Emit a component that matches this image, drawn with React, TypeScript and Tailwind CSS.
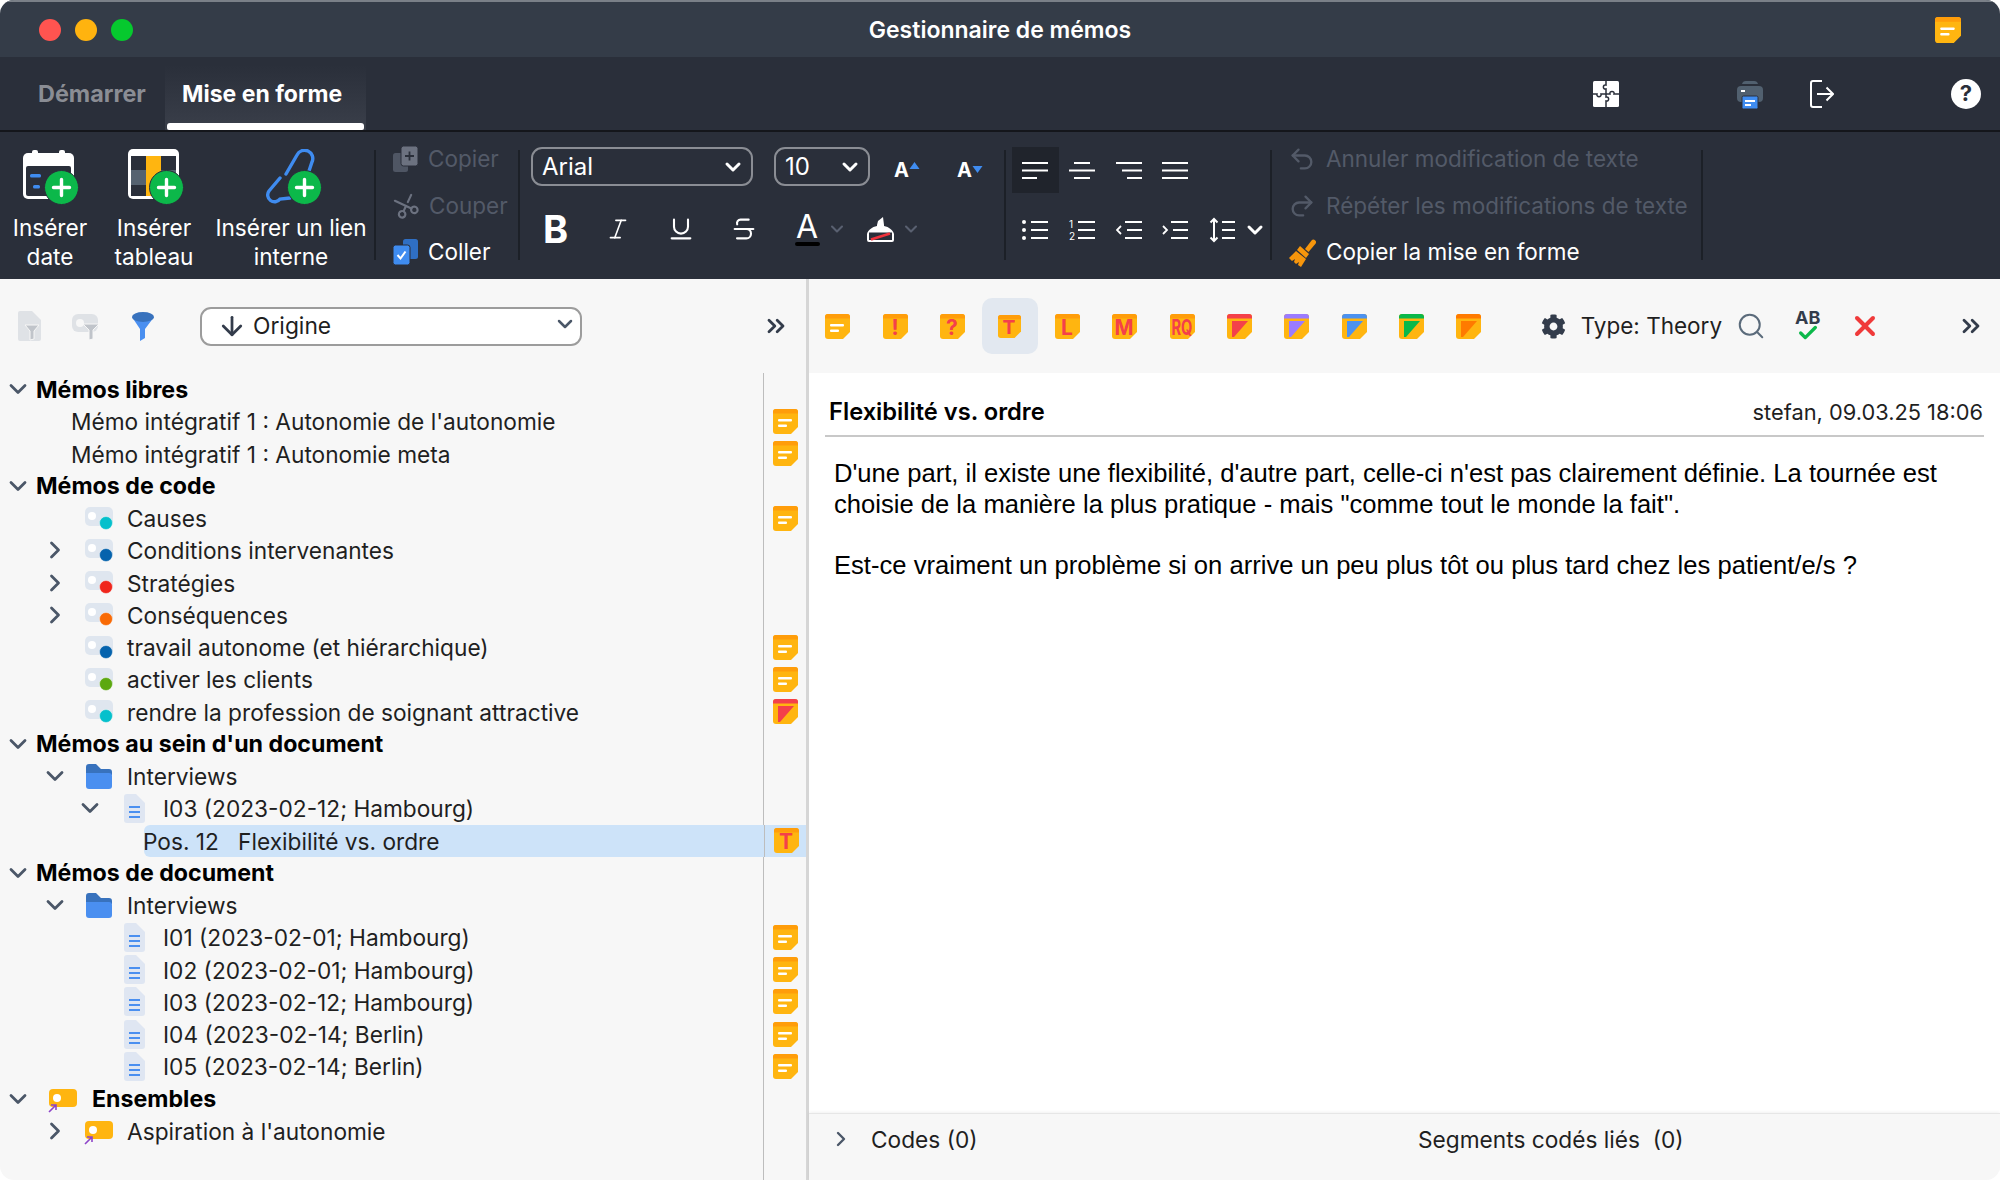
import { ChevronDown, ChevronRight, ChevronsRight, ArrowDown, Italic, Underline, Strikethrough, Scissors, Search, X, Check, Undo2, Redo2 } from "lucide-react";
import { FaCog } from "react-icons/fa";
import type { ReactNode } from "react";

const RED = "#f4404a";

function NoteIcon({ band = "#ff9d0a", tri, letter, lines, size = 25 }: { band?: string; tri?: string; letter?: string; lines?: boolean; size?: number }) {
    return (
        <svg viewBox="0 0 25 25" width={size} height={size} className="shrink-0 overflow-visible">
            <path d="M3 0h19a3 3 0 0 1 3 3v15l-7 7H3a3 3 0 0 1-3-3V3a3 3 0 0 1 3-3z" fill="#ffb510" />
            <path d="M3 0h19a3 3 0 0 1 3 3v1.5H0V3a3 3 0 0 1 3-3z" fill={band} />
            {lines && (
                <>
                    <rect x="5" y="10" width="14" height="2.4" rx="1" fill="#fff" />
                    <rect x="5" y="15.5" width="9" height="2.4" rx="1" fill="#fff" />
                </>
            )}
            {tri && <path d="M5 7h16L7 23H5z" fill={tri} />}
            {letter && (
                <text
                    x="12"
                    y="21"
                    textAnchor="middle"
                    fontFamily="Inter, sans-serif"
                    fontWeight="700"
                    fontSize={21}
                    fill={RED}
                    textLength={letter.length > 1 ? 21 : letter === "M" ? 19 : undefined}
                    lengthAdjust="spacingAndGlyphs"
                >
                    {letter}
                </text>
            )}
        </svg>
    );
}

function CodeIcon({ color }: { color: string }) {
    return (
        <svg viewBox="0 0 28 23" className="h-[23px] w-[28px] shrink-0">
            <rect x="0" y="0" width="28" height="19" rx="5" fill="#dfe6ef" />
            <circle cx="7" cy="9" r="4" fill="#fff" />
            <circle cx="21" cy="16" r="6.5" fill={color} stroke="#f7f7f7" strokeWidth="0.5" />
        </svg>
    );
}

function FolderIcon() {
    return (
        <svg viewBox="0 0 26 25" className="h-[25px] w-[26px] shrink-0">
            <path d="M0 3a3 3 0 0 1 3-3h7l5 5h8a3 3 0 0 1 3 3v3H0z" fill="#3872bd" />
            <path d="M0 9h23a3 3 0 0 1 3 3v10a3 3 0 0 1-3 3H3a3 3 0 0 1-3-3z" fill="#4a8ff0" />
        </svg>
    );
}

function DocIcon() {
    return (
        <svg viewBox="0 0 21 29" className="h-[29px] w-[21px] shrink-0">
            <path d="M3 0h9l9 9v17a3 3 0 0 1-3 3H3a3 3 0 0 1-3-3V3a3 3 0 0 1 3-3z" fill="#dfe6f2" />
            <rect x="5" y="12" width="11" height="2" fill="#4a8ff0" />
            <rect x="5" y="17" width="11" height="2" fill="#4a8ff0" />
            <rect x="5" y="22" width="11" height="2" fill="#4a8ff0" />
        </svg>
    );
}

function SetIcon() {
    return (
        <svg viewBox="0 0 29 24" className="mt-[4px] h-[24px] w-[29px] shrink-0">
            <rect x="1" y="0" width="28" height="18" rx="4" fill="#ffb510" />
            <circle cx="9" cy="9" r="4" fill="#fff" />
            <path d="M1 23l7-7M3 16h5v5" stroke="#8e44c9" strokeWidth="1.6" fill="none" />
        </svg>
    );
}

function PlusBadge({ cx = 38.5, cy = 38.5 }: { cx?: number; cy?: number }) {
    return (
        <>
            <circle cx={cx} cy={cy} r="17" fill="#0cb84a" stroke="#2a2f3a" strokeWidth="1" />
            <path d={`M${cx - 8} ${cy}h16M${cx} ${cy - 8}v16`} stroke="#fff" strokeWidth="3.4" strokeLinecap="round" />
        </>
    );
}

function CalendarIcon() {
    return (
        <svg viewBox="0 0 56 56" className="ml-[1px] h-[56px] w-[56px]">
            <rect x="0" y="4" width="51" height="46" rx="5" fill="#fff" />
            <rect x="3" y="17" width="45" height="30" rx="2" fill="#2a2f3a" />
            <rect x="9" y="1" width="6" height="6" rx="2" fill="#fff" />
            <rect x="36" y="1" width="6" height="6" rx="2" fill="#fff" />
            <rect x="7" y="25" width="11" height="3.5" rx="1.5" fill="#3f8cf0" />
            <rect x="10" y="36" width="7" height="3.5" rx="1.5" fill="#3f8cf0" />
            <PlusBadge />
        </svg>
    );
}

function TableIcon() {
    return (
        <svg viewBox="0 0 56 56" className="ml-[4px] h-[56px] w-[56px]">
            <rect x="0" y="0" width="51" height="50" rx="5" fill="#fff" />
            <rect x="3" y="7" width="45" height="40" fill="#2a2f3a" />
            <rect x="18" y="7" width="15" height="40" fill="#ffb510" />
            <rect x="3" y="21" width="15" height="15" fill="#556270" />
            <rect x="33" y="21" width="15" height="15" fill="#556270" />
            <PlusBadge />
        </svg>
    );
}

function LinkIcon() {
    return (
        <svg viewBox="0 0 56 56" className="ml-[5px] h-[56px] w-[56px]">
            <path d="M20 25L31 6a8 8 0 0 1 15 7l-3 9" fill="none" stroke="#3f8cf0" strokeWidth="3.4" strokeLinecap="round" />
            <path d="M14 29L3 42a6.5 6.5 0 0 0 11 8l10-1" fill="none" stroke="#3f8cf0" strokeWidth="3.4" strokeLinecap="round" />
            <PlusBadge />
        </svg>
    );
}

function CopyIcon() {
    return (
        <svg viewBox="0 0 25 26" className="h-[26px] w-[25px]">
            <rect x="0" y="7" width="15" height="19" rx="2.5" fill="#4f5664" />
            <rect x="8" y="0" width="17" height="20" rx="2.5" fill="#6c7280" stroke="#2a2f3a" strokeWidth="1" />
            <path d="M16.5 5.5v9M12 10h9" stroke="#2a2f3a" strokeWidth="1.8" />
        </svg>
    );
}

function PasteIcon() {
    return (
        <svg viewBox="0 0 25 26" className="h-[26px] w-[25px]">
            <rect x="10" y="0" width="15" height="20" rx="2.5" fill="#2f6fc4" />
            <rect x="0" y="6" width="17" height="20" rx="2.5" fill="#3f8cf0" stroke="#2a2f3a" strokeWidth="1" />
            <path d="M4.5 16l3 3.5 5-7" stroke="#fff" strokeWidth="2" fill="none" />
        </svg>
    );
}

function BrushIcon() {
    return (
        <svg viewBox="0 0 28 29" className="h-[29px] w-[28px]">
            <path d="M17 11l6.5-8.5a2.6 2.6 0 0 1 4 3.3L20.5 14z" fill="#f7960c" />
            <path d="M12 8l9 8-3 4-9-8z" fill="#f7960c" />
            <path d="M8 13l10 8-5 8-3-2 1-3-3 2-2-2 1-3-3 2-3-3z" fill="#f7960c" />
        </svg>
    );
}

function AlignIcon({ lines }: { lines: [number, number][] }) {
    return (
        <svg viewBox="0 0 26 22" className="h-[22px] w-[26px]">
            {lines.map(([x, w], i) => (
                <rect key={i} x={x} y={i * 7.5 + 3} width={w} height="2" fill="#fff" />
            ))}
        </svg>
    );
}

function BulletIcon() {
    return (
        <svg viewBox="0 0 26 24" className="h-[24px] w-[26px]">
            {[4, 12, 20].map((y) => (
                <g key={y}>
                    <circle cx="2" cy={y} r="2" fill="#fff" />
                    <rect x="9" y={y - 1} width="17" height="2" fill="#fff" />
                </g>
            ))}
        </svg>
    );
}

function NumberIcon() {
    return (
        <svg viewBox="0 0 26 24" className="h-[24px] w-[26px] overflow-visible">
            <text x="0" y="10" fontFamily="Inter, sans-serif" fontSize="10" fill="#fff">1</text>
            <text x="0" y="22" fontFamily="Inter, sans-serif" fontSize="10" fill="#fff">2</text>
            {[4, 12, 20].map((y) => (
                <rect key={y} x="9" y={y - 1} width="17" height="2" fill="#fff" />
            ))}
        </svg>
    );
}

function IndentIcon({ out }: { out?: boolean }) {
    return (
        <svg viewBox="0 0 26 24" className="h-[24px] w-[26px]">
            <path d={out ? "M5 8l-4 4 4 4" : "M1 8l4 4-4 4"} stroke="#fff" strokeWidth="1.8" fill="none" />
            {[4, 12, 20].map((y, i) => (
                <rect key={y} x={i === 1 ? 11 : 9} y={y - 1} width={i === 1 ? 15 : 17} height="2" fill="#fff" />
            ))}
        </svg>
    );
}

function SpacingIcon() {
    return (
        <svg viewBox="0 0 26 26" className="h-[26px] w-[26px]">
            <path d="M5 2v22M1.5 5.5L5 2l3.5 3.5M1.5 20.5L5 24l3.5-3.5" stroke="#fff" strokeWidth="2" fill="none" />
            {[5, 13, 21].map((y) => (
                <rect key={y} x="13" y={y - 1} width="13" height="2" fill="#fff" />
            ))}
        </svg>
    );
}

function HighlighterIcon() {
    return (
        <svg viewBox="0 0 27 26" className="h-[26px] w-[27px]">
            <path d="M10 9l1-4 5-4 1 8v1c5 1 9 4 10 8v6a2 2 0 0 1-2 2H2a2 2 0 0 1-2-2v-6c1-4 5-7 10-8z" fill="#fff" />
            <rect x="2" y="16.5" width="23" height="7.5" fill="#2a2f3a" />
            <path d="M4 23.5l19-6" stroke="#f0323c" strokeWidth="2.6" />
        </svg>
    );
}

function PuzzleIcon() {
    return (
        <svg viewBox="0 0 26 30" className="h-[30px] w-[26px]">
            <rect x="0" y="2" width="26" height="26" rx="1.5" fill="#fff" />
            <path
                d="M13 2v4c-3.5-1-3.5 5 0 4v5M13 15v3c3.5-1 3.5 5 0 4v6M0 15h4c-1 3.5 5 3.5 4 0h5M13 15h4c-1-3.5 5-3.5 4 0h5"
                stroke="#2a2f3a"
                strokeWidth="1.5"
                fill="none"
            />
        </svg>
    );
}

function PrinterIcon() {
    return (
        <svg viewBox="0 0 26 30" className="h-[30px] w-[26px]">
            <path d="M5 5a4 4 0 0 1 4-3h8a4 4 0 0 1 4 3z" fill="#51606f" />
            <rect x="0" y="7" width="26" height="16" rx="4" fill="#51606f" />
            <rect x="4" y="11" width="4" height="2" fill="#fff" />
            <rect x="5" y="17" width="16" height="13" rx="1.5" fill="#3f8cf0" stroke="#2a2f3a" strokeWidth="1" />
            <rect x="8" y="21" width="10" height="2" fill="#fff" />
            <rect x="8" y="25" width="6" height="2" fill="#fff" />
        </svg>
    );
}

function ExitIcon() {
    return (
        <svg viewBox="0 0 24 30" className="h-[30px] w-[24px]">
            <path d="M12 2H3a2 2 0 0 0-2 2v22a2 2 0 0 0 2 2h9" stroke="#fff" strokeWidth="2" fill="none" />
            <path d="M7 15h16M16.5 8.5L23 15l-6.5 6.5" stroke="#fff" strokeWidth="2" fill="none" />
        </svg>
    );
}

function FunnelIcon() {
    return (
        <svg viewBox="0 0 22 29" className="h-[29px] w-[22px]">
            <path d="M0 5l8 12v12l5-3V17l9-12z" fill="#4a8ff0" />
            <ellipse cx="11" cy="5" rx="11" ry="5" fill="#3872bd" />
        </svg>
    );
}

function DocFilterIcon() {
    return (
        <svg viewBox="0 0 24 30" className="h-[30px] w-[24px]">
            <path d="M2 0h12l9 9v19a2 2 0 0 1-2 2H2a2 2 0 0 1-2-2V2a2 2 0 0 1 2-2z" fill="#dfe2e6" />
            <path d="M7 14h14l-5 6v8l-4 1v-9z" fill="#c0c4ca" stroke="#f7f7f7" strokeWidth="1" />
        </svg>
    );
}

function QuoteFilterIcon() {
    return (
        <svg viewBox="0 0 28 28" className="h-[28px] w-[28px]">
            <rect x="0" y="2" width="26" height="18" rx="6" fill="#dfe2e6" />
            <circle cx="8" cy="11" r="4" fill="#f7f7f7" />
            <path d="M11 12h16l-6 6v9l-4 1v-10z" fill="#c0c4ca" stroke="#f7f7f7" strokeWidth="1" />
        </svg>
    );
}

function Sep() {
    return <div className="mt-[18px] h-[110px] w-[2px] shrink-0 bg-[#1c2027]" />;
}

function RibbonBtn({ w, icon, lines }: { w: string; icon: ReactNode; lines: string[] }) {
    return (
        <div className={`flex shrink-0 flex-col items-center pt-[17px] ${w}`}>
            {icon}
            <div className="mt-[8px] text-center text-[22.6px] leading-[29px] text-white">
                {lines.map((l) => (
                    <div key={l}>{l}</div>
                ))}
            </div>
        </div>
    );
}

function ActionRow({ icon, label, muted }: { icon: ReactNode; label: string; muted?: boolean }) {
    return (
        <div className={`flex h-[46.5px] items-center text-[22.5px] ${muted ? "text-[#535a68]" : "text-white"}`}>
            {icon}
            <span className="ml-[10px] whitespace-nowrap">{label}</span>
        </div>
    );
}

function Dropdown({ w, label }: { w: string; label: string }) {
    return (
        <div className={`flex h-[39px] shrink-0 items-center justify-between rounded-[11px] border-2 border-[#8a8d94] pl-[9px] pr-[6px] text-[24px] text-white ${w}`}>
            <span>{label}</span>
            <ChevronDown size={24} strokeWidth={3} />
        </div>
    );
}

function SizeBtn({ up }: { up?: boolean }) {
    return (
        <div className="mt-[6px] flex w-[27px] shrink-0 items-center text-[20px] font-bold leading-none text-white">
            <span>A</span>
            <svg viewBox="0 0 10 7" className={`h-[7px] w-[11px] ${up ? "-mt-[9px]" : "-mt-[1px]"}`}>
                <path d={up ? "M5 0l5 7H0z" : "M0 0h10L5 7z"} fill="#3f8cf0" />
            </svg>
        </div>
    );
}

function Cell({ active, children }: { active?: boolean; children: ReactNode }) {
    return <div className={`flex h-[46px] w-[46.7px] shrink-0 items-center justify-center ${active ? "bg-[#20242c]" : ""}`}>{children}</div>;
}

function Ribbon() {
    return (
        <div className="flex h-[149px] shrink-0 border-t-2 border-[#14161b] bg-[#2a2f3a]">
            <RibbonBtn w="w-[100px]" icon={<CalendarIcon />} lines={["Insérer", "date"]} />
            <RibbonBtn w="w-[108px]" icon={<TableIcon />} lines={["Insérer", "tableau"]} />
            <RibbonBtn w="w-[166px]" icon={<LinkIcon />} lines={["Insérer un lien", "interne"]} />
            <Sep />
            <div className="mt-[4px] w-[142px] shrink-0 pl-[17px]">
                <ActionRow muted icon={<CopyIcon />} label="Copier" />
                <ActionRow muted icon={<Scissors size={26} className="-rotate-[110deg] text-[#6c7280]" />} label="Couper" />
                <ActionRow icon={<PasteIcon />} label="Coller" />
            </div>
            <Sep />
            <div className="w-[484px] shrink-0 pt-[15px]">
                <div className="flex items-center pl-[11px]">
                    <Dropdown w="w-[222px]" label="Arial" />
                    <div className="ml-[21px]">
                        <Dropdown w="w-[96px]" label="10" />
                    </div>
                    <div className="ml-[24px]">
                        <SizeBtn up />
                    </div>
                    <div className="ml-[36px]">
                        <SizeBtn />
                    </div>
                </div>
                <div className="mt-[26px] flex h-[34px] items-center text-white">
                    <span className="ml-[23px] w-[25px] text-[38px] font-bold leading-none">B</span>
                    <Italic size={26} strokeWidth={1.5} className="ml-[37px]" />
                    <Underline size={28} strokeWidth={1.8} className="ml-[36px]" />
                    <Strikethrough size={28} strokeWidth={1.8} className="ml-[35px]" />
                    <div className="ml-[36px] flex w-[26px] flex-col items-center">
                        <span className="text-[32px] leading-[30px]">A</span>
                        <div className="h-[4px] w-[25px] rounded-sm bg-black" />
                    </div>
                    <ChevronDown size={20} strokeWidth={2.5} className="ml-[7px] text-[#596070]" />
                    <div className="ml-[20px]">
                        <HighlighterIcon />
                    </div>
                    <ChevronDown size={20} strokeWidth={2.5} className="ml-[7px] text-[#596070]" />
                </div>
            </div>
            <Sep />
            <div className="w-[264px] shrink-0 pl-[6px] pt-[15px]">
                <div className="flex">
                    <Cell active><AlignIcon lines={[[0, 26], [0, 26], [0, 15]]} /></Cell>
                    <Cell><AlignIcon lines={[[5, 16], [0, 26], [5, 16]]} /></Cell>
                    <Cell><AlignIcon lines={[[0, 26], [6, 20], [11, 15]]} /></Cell>
                    <Cell><AlignIcon lines={[[0, 26], [0, 26], [0, 26]]} /></Cell>
                </div>
                <div className="mt-[14px] flex items-center">
                    <Cell><BulletIcon /></Cell>
                    <Cell><NumberIcon /></Cell>
                    <Cell><IndentIcon out /></Cell>
                    <Cell><IndentIcon /></Cell>
                    <Cell><SpacingIcon /></Cell>
                    <ChevronDown size={24} strokeWidth={3} className="-ml-[2px] text-white" />
                </div>
            </div>
            <Sep />
            <div className="mt-[4px] w-[429px] shrink-0 pl-[16px]">
                <ActionRow muted icon={<Undo2 size={28} className="text-[#535a68]" />} label="Annuler modification de texte" />
                <ActionRow muted icon={<Redo2 size={28} className="text-[#535a68]" />} label="Répéter les modifications de texte" />
                <ActionRow icon={<BrushIcon />} label="Copier la mise en forme" />
            </div>
            <Sep />
        </div>
    );
}

type Row = {
    label: string;
    pad: string;
    bold?: boolean;
    chevron?: "down" | "right";
    noChevron?: boolean;
    icon?: ReactNode;
    iconGap?: string;
    textGap: string;
    note?: ReactNode;
    selected?: boolean;
};

const note = <NoteIcon lines />;
const heading = (label: string): Row => ({ label, pad: "pl-[9px]", bold: true, chevron: "down", textGap: "ml-[9px]" });
const code = (label: string, color: string, hasNote: boolean, right?: boolean): Row => ({
    label,
    pad: "pl-[46px]",
    chevron: right ? "right" : undefined,
    noChevron: !right,
    icon: <CodeIcon color={color} />,
    iconGap: "ml-[21px]",
    textGap: "ml-[14px]",
    note: hasNote ? note : undefined,
});
const folder: Row = { label: "Interviews", pad: "pl-[46px]", chevron: "down", icon: <FolderIcon />, iconGap: "ml-[22px]", textGap: "ml-[15px]" };
const doc = (label: string, down?: boolean): Row => ({
    label,
    pad: "pl-[81px]",
    chevron: down ? "down" : undefined,
    noChevron: !down,
    icon: <DocIcon />,
    iconGap: "ml-[25px]",
    textGap: "ml-[18px]",
    note: down ? undefined : note,
});

const rows: Row[] = [
    heading("Mémos libres"),
    { label: "Mémo intégratif 1 : Autonomie de l'autonomie", pad: "pl-[71px]", textGap: "ml-0", note },
    { label: "Mémo intégratif 1 : Autonomie meta", pad: "pl-[71px]", textGap: "ml-0", note },
    heading("Mémos de code"),
    code("Causes", "#05c0cc", true),
    code("Conditions intervenantes", "#0563ad", false, true),
    code("Stratégies", "#f0261c", false, true),
    code("Conséquences", "#f96a05", false, true),
    code("travail autonome (et hiérarchique)", "#0563ad", true),
    code("activer les clients", "#5ca810", true),
    { ...code("rendre la profession de soignant attractive", "#05c0cc", false), note: <NoteIcon band="#f4404a" tri="#f4404a" /> },
    heading("Mémos au sein d'un document"),
    folder,
    doc("I03 (2023-02-12; Hambourg)", true),
    { label: "Pos. 12\u00a0\u00a0\u00a0Flexibilité vs. ordre", pad: "", textGap: "", selected: true, note: <NoteIcon letter="T" /> },
    heading("Mémos de document"),
    folder,
    doc("I01 (2023-02-01; Hambourg)"),
    doc("I02 (2023-02-01; Hambourg)"),
    doc("I03 (2023-02-12; Hambourg)"),
    doc("I04 (2023-02-14; Berlin)"),
    doc("I05 (2023-02-14; Berlin)"),
    { label: "Ensembles", pad: "pl-[9px]", bold: true, chevron: "down", icon: <SetIcon />, iconGap: "ml-[21px]", textGap: "ml-[15px]" },
    { label: "Aspiration à l'autonomie", pad: "pl-[46px]", chevron: "right", icon: <SetIcon />, iconGap: "ml-[20px]", textGap: "ml-[14px]" },
];

function TreeRow({ row }: { row: Row }) {
    if (row.selected) {
        return (
            <div className="flex h-[32.26px] shrink-0 pl-[144px]">
                <div className="flex flex-1 items-center rounded-l-md bg-[#cde3f9]">
                    <span className="-ml-[1px] flex-1 translate-y-[1px] whitespace-nowrap text-[22.7px] text-[#1f1f1f]">{row.label}</span>
                    <div className="flex h-full w-[42px] items-center justify-center border-l border-[#bdbdbd] pl-[1px]">{row.note}</div>
                </div>
            </div>
        );
    }
    return (
        <div className="flex h-[32.26px] shrink-0 items-center">
            <div className={`flex w-[763px] items-center ${row.pad}`}>
                {row.chevron && (
                    <div className="flex w-[18px] shrink-0 justify-center text-[#4b5768]">
                        {row.chevron === "down" ? <ChevronDown size={28} strokeWidth={2.4} className="shrink-0" /> : <ChevronRight size={28} strokeWidth={2.4} className="shrink-0" />}
                    </div>
                )}
                {row.noChevron && <div className="w-[18px] shrink-0" />}
                {row.icon && <div className={row.iconGap}>{row.icon}</div>}
                <span className={`translate-y-[1px] whitespace-nowrap ${row.textGap} ${row.bold ? "text-[23.2px] font-bold text-black" : "text-[22.7px] text-[#1f1f1f]"}`}>{row.label}</span>
            </div>
            <div className="flex h-full w-[42px] items-center justify-center border-l border-[#bdbdbd] pl-[1px]">{row.note}</div>
        </div>
    );
}

function LeftPanel() {
    return (
        <div className="flex w-[806px] shrink-0 flex-col bg-[#f7f7f7]">
            <div className="flex h-[94px] shrink-0 items-center pl-[18px]">
                <DocFilterIcon />
                <div className="ml-[30px]">
                    <QuoteFilterIcon />
                </div>
                <div className="ml-[32px]">
                    <FunnelIcon />
                </div>
                <div className="ml-[46px] flex h-[39px] w-[382px] items-center rounded-[11px] border-2 border-[#9c9c9c] bg-white pl-[15px] pr-[3px] text-[22.8px] text-[#1f1f1f]">
                    <ArrowDown size={30} strokeWidth={2.2} className="text-[#333c4b]" />
                    <span className="ml-[6px] flex-1">Origine</span>
                    <ChevronDown size={24} strokeWidth={2.5} className="-mt-[4px] text-[#4b5768]" />
                </div>
                <ChevronsRight size={28} strokeWidth={2.4} className="ml-[180px] text-[#333c4b]" />
            </div>
            <div className="flex min-h-0 flex-1 flex-col">
                {rows.map((row, i) => (
                    <TreeRow key={i} row={row} />
                ))}
                <div className="ml-[763px] flex-1 border-l border-[#bdbdbd]" />
            </div>
        </div>
    );
}

const toolbarNotes: ReactNode[] = [
    <NoteIcon lines />,
    <NoteIcon letter="!" />,
    <NoteIcon letter="?" />,
    <NoteIcon letter="T" size={23} />,
    <NoteIcon letter="L" />,
    <NoteIcon letter="M" />,
    <NoteIcon letter="RQ" />,
    <NoteIcon band="#f4404a" tri="#f4404a" />,
    <NoteIcon band="#9b7bff" tri="#9b7bff" />,
    <NoteIcon band="#4c92f0" tri="#4c92f0" />,
    <NoteIcon band="#0ab84a" tri="#0ab84a" />,
    <NoteIcon band="#ff7a00" tri="#ff7a00" />,
];

function RightPanel() {
    return (
        <div className="flex min-w-0 flex-1 flex-col bg-white">
            <div className="flex h-[94px] shrink-0 items-center bg-[#f7f7f7]">
                {toolbarNotes.map((icon, i) => (
                    <div key={i} className="flex w-[57.4px] shrink-0 items-center justify-center">
                        <div className={`flex h-[56px] w-[56px] items-center justify-center rounded-[10px] ${i === 3 ? "bg-[#e2e8f0]" : ""}`}>{icon}</div>
                    </div>
                ))}
                <FaCog className="ml-[43px] h-[25px] w-[25px] text-[#333c4b]" />
                <span className="ml-[15px] w-[140px] whitespace-nowrap text-[22.5px] text-[#1f1f1f]">Type: Theory</span>
                <Search size={30} strokeWidth={1.6} className="ml-[15px] text-[#5b6b7b]" />
                <div className="ml-[28px] flex w-[28px] flex-col items-center">
                    <span className="text-[18px] font-bold leading-[17px] text-[#333c4b]">AB</span>
                    <Check size={22} strokeWidth={3.6} className="-mt-[4px] text-[#0cb84a]" />
                </div>
                <X size={32} strokeWidth={3} className="ml-[27px] text-[#f03a3a]" />
                <ChevronsRight size={28} strokeWidth={2.4} className="ml-[76px] text-[#333c4b]" />
            </div>
            <div className="mx-[16px] flex h-[64px] shrink-0 items-center justify-between border-b-2 border-[#c8c8c8] pl-[4px] pr-[1px] pt-[16px] text-black">
                <span className="text-[23.7px] font-semibold">Flexibilité vs. ordre</span>
                <span className="text-[21.8px] text-[#1f1f1f]">stefan, 09.03.25 18:06</span>
            </div>
            <div className="flex-1 pl-[25px] pr-[40px] pt-[21px] font-['Liberation_Sans',Arial,sans-serif] text-[25.6px] leading-[30.6px] text-black">
                <p>D'une part, il existe une flexibilité, d'autre part, celle-ci n'est pas clairement définie. La tournée est choisie de la manière la plus pratique - mais "comme tout le monde la fait".</p>
                <p className="mt-[30.6px]">Est-ce vraiment un problème si on arrive un peu plus tôt ou plus tard chez les patient/e/s ?</p>
            </div>
            <div className="flex h-[67px] shrink-0 items-center border-t border-[#e6e6e6] bg-[#f7f7f7] pb-[13px] text-[22.7px] text-[#1f1f1f] shadow-[0_-1px_3px_rgba(0,0,0,0.06)]">
                <ChevronRight size={24} strokeWidth={2.4} className="ml-[20px] -mt-[3px] text-[#4b5768]" />
                <span className="ml-[18px] w-[547px]">Codes (0)</span>
                <span>Segments codés liés&nbsp; (0)</span>
            </div>
        </div>
    );
}

export default function App() {
    return (
        <div className="flex h-[1180px] w-[2000px] flex-col overflow-hidden rounded-[14px] font-[Inter,sans-serif]">
            <div className="flex h-[57px] shrink-0 items-center border-t-2 border-[#7a8088] bg-[#343c48]">
                <div className="flex flex-1 gap-[14px] pl-[39px]">
                    <div className="h-[22px] w-[22px] rounded-full bg-[#ff5450]" />
                    <div className="h-[22px] w-[22px] rounded-full bg-[#ffb30f]" />
                    <div className="h-[22px] w-[22px] rounded-full bg-[#06c92e]" />
                </div>
                <div className="translate-y-[1px] text-[23px] font-semibold text-white">Gestionnaire de mémos</div>
                <div className="flex flex-1 justify-end pr-[39px]">
                    <NoteIcon lines size={26} />
                </div>
            </div>
            <div className="flex h-[73px] shrink-0 bg-[#2a2f3a]">
                <div className="flex w-[146px] items-center pl-[38px] text-[23.4px] font-bold text-[#8a8d94]">Démarrer</div>
                <div className="ml-[19px] mt-[8px] flex w-[201px] flex-col bg-gradient-to-b from-[#2a2f3a] to-[#3a3f4a]">
                    <div className="flex flex-1 items-center pl-[17px] text-[23px] font-bold text-white">Mise en forme</div>
                    <div className="mx-[2px] h-[7px] rounded-t-[3px] rounded-b-[2px] bg-white" />
                </div>
                <div className="ml-auto flex items-center pr-[19px]">
                    <PuzzleIcon />
                    <div className="ml-[118px]">
                        <PrinterIcon />
                    </div>
                    <div className="ml-[47px]">
                        <ExitIcon />
                    </div>
                    <div className="ml-[117px] flex h-[30px] w-[30px] items-center justify-center rounded-full bg-white text-[22px] font-bold text-[#2a2f3a]">?</div>
                </div>
            </div>
            <Ribbon />
            <div className="flex min-h-0 flex-1">
                <LeftPanel />
                <div className="w-[3px] shrink-0 bg-[#d6d6d6]" />
                <RightPanel />
            </div>
        </div>
    );
}
